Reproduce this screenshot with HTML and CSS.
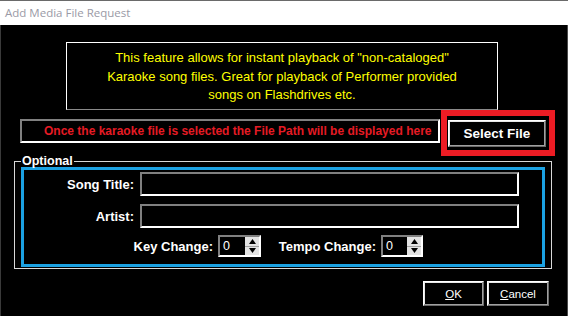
FILE: index.html
```html
<!DOCTYPE html>
<html>
<head>
<meta charset="utf-8">
<link rel="stylesheet" href="styles.css">
</head>
<body>
<div class="window">
  <div class="titlebar">Add Media File Request</div>
  <div class="info">
    This feature allows for instant playback of "non-cataloged"<br>
    Karaoke song files. Great for playback of Performer provided<br>
    songs on Flashdrives etc.
  </div>
  <div class="file-row">
    <div class="path-field">Once the karaoke file is selected the File Path will be displayed here</div>
    <div class="highlight">
      <div class="btn btn-select">Select File</div>
    </div>
  </div>
  <fieldset class="group">
    <legend class="group-label">Optional</legend>
    <div class="blue">
      <div class="form-grid">
        <div class="label">Song Title:</div>
        <div class="input"></div>
        <div class="label">Artist:</div>
        <div class="input"></div>
      </div>
      <div class="spin-row">
        <div class="label key-label">Key Change:</div>
        <div class="spin">
          <div class="spin-val">0</div>
          <div class="spin-btns">
            <div class="spin-btn"><svg width="7" height="5" viewBox="0 0 7 5"><path d="M3.5 0 L7 5 L0 5 Z" fill="#000"/></svg></div>
            <div class="spin-btn"><svg width="7" height="5" viewBox="0 0 7 5"><path d="M0 0 L7 0 L3.5 5 Z" fill="#000"/></svg></div>
          </div>
        </div>
        <div class="label tempo-label">Tempo Change:</div>
        <div class="spin">
          <div class="spin-val">0</div>
          <div class="spin-btns">
            <div class="spin-btn"><svg width="7" height="5" viewBox="0 0 7 5"><path d="M3.5 0 L7 5 L0 5 Z" fill="#000"/></svg></div>
            <div class="spin-btn"><svg width="7" height="5" viewBox="0 0 7 5"><path d="M0 0 L7 0 L3.5 5 Z" fill="#000"/></svg></div>
          </div>
        </div>
      </div>
    </div>
  </fieldset>
  <div class="actions">
    <div class="btn btn-ok"><u>O</u>K</div>
    <div class="btn btn-cancel"><u>C</u>ancel</div>
  </div>
</div>
</body>
</html>
```
FILE: styles.css
```css
* { box-sizing: border-box; }
html, body { margin: 0; padding: 0; background: #000; }
.window {
  width: 568px;
  height: 316px;
  overflow: hidden;
  background: #000;
  font-family: "Liberation Sans", Arial, sans-serif;
  color: #fff;
  box-shadow: inset 1px 0 #3a3a3a, inset -1px 0 #4a4a4a;
}
.titlebar {
  height: 25px;
  background: #fff;
  border-top: 1px solid #6a6a6a;
  font-family: "Open Sans", "Noto Sans", sans-serif;
  font-size: 11.5px;
  line-height: 23px;
  color: #9a9aa6;
  padding-left: 5px;
}
.info {
  margin: 17px 0 0 66px;
  width: 432px;
  height: 68px;
  border: 1px solid #fff;
  border-bottom-color: #8a8a8a;
  color: #ffff00;
  font-size: 13px;
  line-height: 18.5px;
  text-align: center;
  padding-top: 6px;
}
.file-row {
  display: flex;
  align-items: flex-start;
}
.path-field {
  margin: 9px 0 0 20px;
  width: 420px;
  height: 24px;
  border: 2px solid #fff;
  border-top-color: #808080;
  border-left-color: #808080;
  color: #e51b24;
  font-weight: bold;
  font-size: 12px;
  line-height: 20px;
  padding-left: 22px;
  white-space: nowrap;
}
.highlight {
  margin-left: 1px;
  width: 114px;
  height: 46px;
  border: 6px solid #ed1c24;
  padding: 4px 3px 3px 1px;
}
.btn {
  border: 1px solid #fff;
  border-right-color: #6a6a6a;
  border-bottom-color: #6a6a6a;
  box-shadow: inset -1px -1px #a0a0a0, inset 1px 1px #e6e6e6;
  display: flex;
  align-items: center;
  justify-content: center;
  color: #fff;
}
.btn-select {
  width: 98px;
  height: 27px;
  font-weight: bold;
  font-size: 13.5px;
}
.group {
  margin: 0 0 0 14px;
  width: 538px;
  border: 1px solid #d8d8d8;
  padding: 1px 6px 1px 6px;
  min-width: 0;
}
.group-label {
  padding: 0 1px;
  margin-left: 0;
  font-weight: bold;
  font-size: 12.5px;
  line-height: 10px;
  color: #fff;
}
.blue {
  width: 524px;
  height: 100px;
  border: 3px solid #1ba1e2;
  padding: 2px 0 0 0;
}
.form-grid {
  display: grid;
  grid-template-columns: 110px 379px;
  column-gap: 6px;
  row-gap: 8px;
}
.label {
  font-weight: bold;
  font-size: 13px;
  text-align: right;
  align-self: center;
  white-space: nowrap;
}
.input {
  height: 24px;
  border: 2px solid #fff;
  border-top-color: #808080;
  border-left-color: #808080;
}
.spin-row {
  display: flex;
  align-items: center;
  margin-top: 7px;
}
.key-label { width: 189px; }
.tempo-label { width: 99px; margin-left: 16px; }
.spin {
  margin-left: 5px;
  width: 43px;
  height: 22px;
  border: 2px solid #fff;
  border-top-color: #808080;
  border-left-color: #808080;
  display: flex;
}
.tempo-label + .spin { width: 42px; }
.spin-val {
  flex: 1;
  font-size: 12.5px;
  line-height: 18px;
  padding-left: 3px;
  color: #fff;
}
.spin-btns {
  width: 14px;
  display: flex;
  flex-direction: column;
  gap: 1px;
  background: #a0a0a0;
}
.spin-btn {
  flex: 1;
  background: #e3e3e3;
  display: flex;
  align-items: center;
  justify-content: center;
}
.actions {
  display: flex;
  justify-content: flex-end;
  gap: 3px;
  margin-top: 12px;
  padding-right: 19px;
}
.btn-ok, .btn-cancel {
  height: 25px;
  font-size: 11.5px;
}
.btn-ok { width: 61px; }
.btn-cancel { width: 62px; }
```
